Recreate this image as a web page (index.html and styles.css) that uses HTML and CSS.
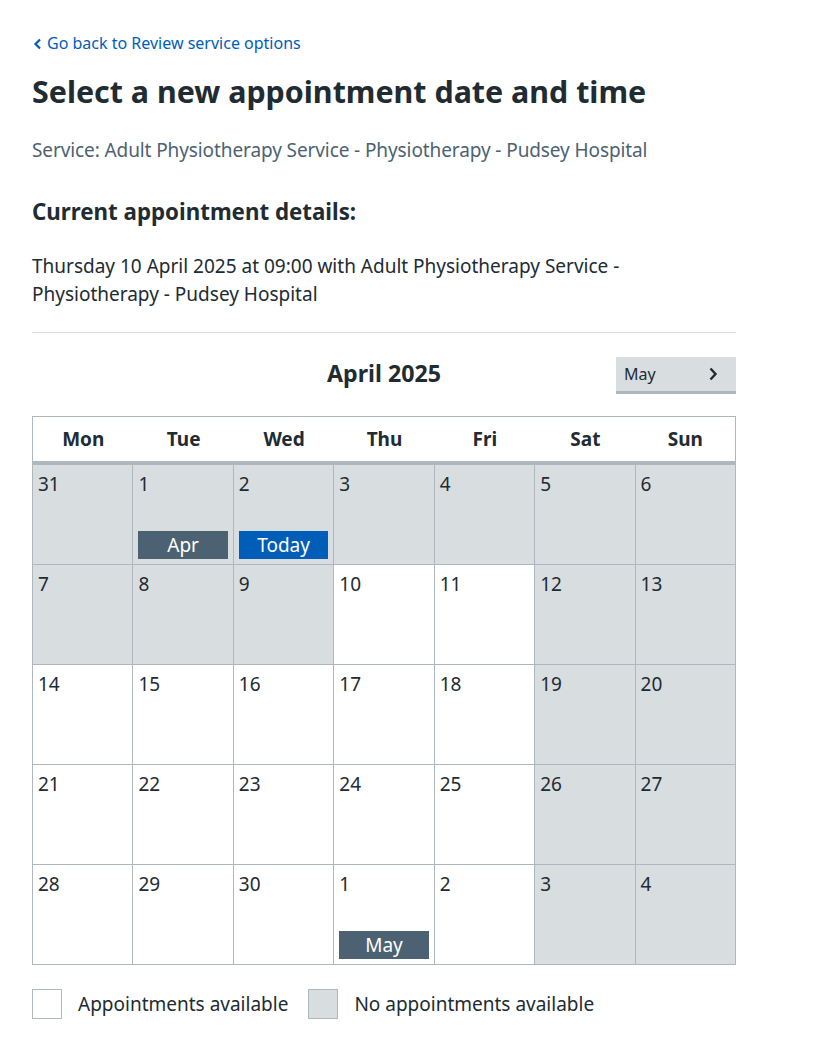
FILE: index.html
```html
<!DOCTYPE html>
<html lang="en">
<head>
<meta charset="utf-8">
<title>Select a new appointment date and time</title>
<link rel="stylesheet" href="styles.css">
</head>
<body>
<main class="page">
  <a class="back" href="#"><svg class="back-icon" viewBox="0 0 10 14" width="10" height="14" aria-hidden="true"><path d="M8 2.5 L3.5 7 L8 11.5" fill="none" stroke="#005eb8" stroke-width="2.2"/></svg>Go back to Review service options</a>
  <h1 class="title">Select a new appointment date and time</h1>
  <p class="service">Service: Adult Physiotherapy Service - Physiotherapy - Pudsey Hospital</p>
  <h2 class="subtitle">Current appointment details:</h2>
  <p class="details">Thursday 10 April 2025 at 09:00 with Adult Physiotherapy Service - Physiotherapy - Pudsey Hospital</p>
  <hr class="rule">
  <div class="month-bar">
    <div class="month-spacer"></div>
    <h2 class="month-title">April 2025</h2>
    <div class="month-nav">
      <button class="next-btn" type="button"><span>May</span><svg viewBox="0 0 10 14" width="10" height="14" aria-hidden="true"><path d="M2.5 1.5 L7.5 7 L2.5 12.5" fill="none" stroke="#212b32" stroke-width="2.4"/></svg></button>
    </div>
  </div>
  <div class="calendar">
    <div class="dow">Mon</div><div class="dow">Tue</div><div class="dow">Wed</div><div class="dow">Thu</div><div class="dow">Fri</div><div class="dow">Sat</div><div class="dow">Sun</div>

    <div class="day na">31</div>
    <div class="day na">1<span class="tag tag-month">Apr</span></div>
    <div class="day na">2<span class="tag tag-today">Today</span></div>
    <div class="day na">3</div>
    <div class="day na">4</div>
    <div class="day na">5</div>
    <div class="day na">6</div>

    <div class="day na">7</div>
    <div class="day na">8</div>
    <div class="day na">9</div>
    <div class="day">10</div>
    <div class="day">11</div>
    <div class="day na">12</div>
    <div class="day na">13</div>

    <div class="day">14</div>
    <div class="day">15</div>
    <div class="day">16</div>
    <div class="day">17</div>
    <div class="day">18</div>
    <div class="day na">19</div>
    <div class="day na">20</div>

    <div class="day">21</div>
    <div class="day">22</div>
    <div class="day">23</div>
    <div class="day">24</div>
    <div class="day">25</div>
    <div class="day na">26</div>
    <div class="day na">27</div>

    <div class="day">28</div>
    <div class="day">29</div>
    <div class="day">30</div>
    <div class="day">1<span class="tag tag-month">May</span></div>
    <div class="day">2</div>
    <div class="day na">3</div>
    <div class="day na">4</div>
  </div>
  <div class="legend">
    <div class="legend-item"><span class="swatch"></span>Appointments available</div>
    <div class="legend-item"><span class="swatch swatch-na"></span>No appointments available</div>
  </div>
</main>
</body>
</html>
```

FILE: styles.css
```css
* { box-sizing: border-box; }
html, body { margin: 0; padding: 0; background: #fff; }
body {
  font-family: "Noto Sans", "Open Sans", sans-serif;
  color: #212b32;
}
.page {
  width: 704px;
  margin-left: 32px;
  padding-top: 31px;
}
.back {
  display: inline-flex;
  align-items: center;
  gap: 5px;
  color: #005eb8;
  text-decoration: none;
  font-size: 16px;
  line-height: 24px;
}
.back-icon { margin-top: 1px; }
.title {
  margin: 16px 0 0;
  font-size: 30.4px;
  line-height: 40px;
  font-weight: 700;
}
.service {
  margin: 24px 0 0;
  font-size: 19px;
  letter-spacing: -0.1px;
  line-height: 28px;
  color: #4c6272;
}
.subtitle {
  margin: 32px 0 0;
  font-size: 22.3px;
  line-height: 32px;
  font-weight: 700;
}
.details {
  margin: 24px 0 0;
  font-size: 19px;
  line-height: 28px;
  width: 640px;
}
.rule {
  margin: 24px 0 0;
  border: 0;
  border-top: 1px solid #d8dde0;
  height: 0;
}
.month-bar {
  margin-top: 24px;
  display: grid;
  grid-template-columns: 120px 1fr 120px;
  align-items: center;
}
.month-title {
  margin: 0 0 4px;
  text-align: center;
  font-size: 23.2px;
  line-height: 32px;
  font-weight: 700;
}
.next-btn {
  width: 120px;
  height: 37px;
  border: 0;
  border-bottom: 3px solid #aeb7bd;
  background: #d8dde0;
  display: flex;
  align-items: center;
  justify-content: space-between;
  padding: 0 18px 0 8px;
  font-family: inherit;
  font-size: 16px;
  color: #212b32;
}
.calendar {
  margin-top: 22px;
  display: grid;
  grid-template-columns: repeat(7, 1fr);
  grid-auto-rows: 100px;
  grid-template-rows: 48px;
  border-top: 1px solid #aeb7bd;
  border-left: 1px solid #aeb7bd;
}
.dow {
  border-bottom: 4px solid #aeb7bd;
  display: flex;
  align-items: center;
  justify-content: center;
  font-weight: 700;
  font-size: 19px;
  padding-top: 1px;
}
.dow:nth-child(7) { border-right: 1px solid #aeb7bd; }
.day {
  border-right: 1px solid #aeb7bd;
  border-bottom: 1px solid #aeb7bd;
  padding: 6px 5px 5px 5px;
  font-size: 19px;
  line-height: 26px;
  display: flex;
  flex-direction: column;
  justify-content: space-between;
  align-items: stretch;
}
.na { background: #d8dde0; }
.tag {
  display: block;
  height: 28px;
  line-height: 28px;
  text-align: center;
  color: #fff;
  font-size: 19px;
}
.tag-month { background: #4c6272; }
.tag-today { background: #005eb8; }
.legend {
  margin-top: 24px;
  display: flex;
  gap: 20px;
  font-size: 19px;
  line-height: 30px;
}
.legend-item {
  display: flex;
  align-items: center;
  gap: 16px;
}
.swatch {
  width: 30px;
  height: 30px;
  border: 1px solid #aeb7bd;
  background: #fff;
}
.swatch-na { background: #d8dde0; }
```
